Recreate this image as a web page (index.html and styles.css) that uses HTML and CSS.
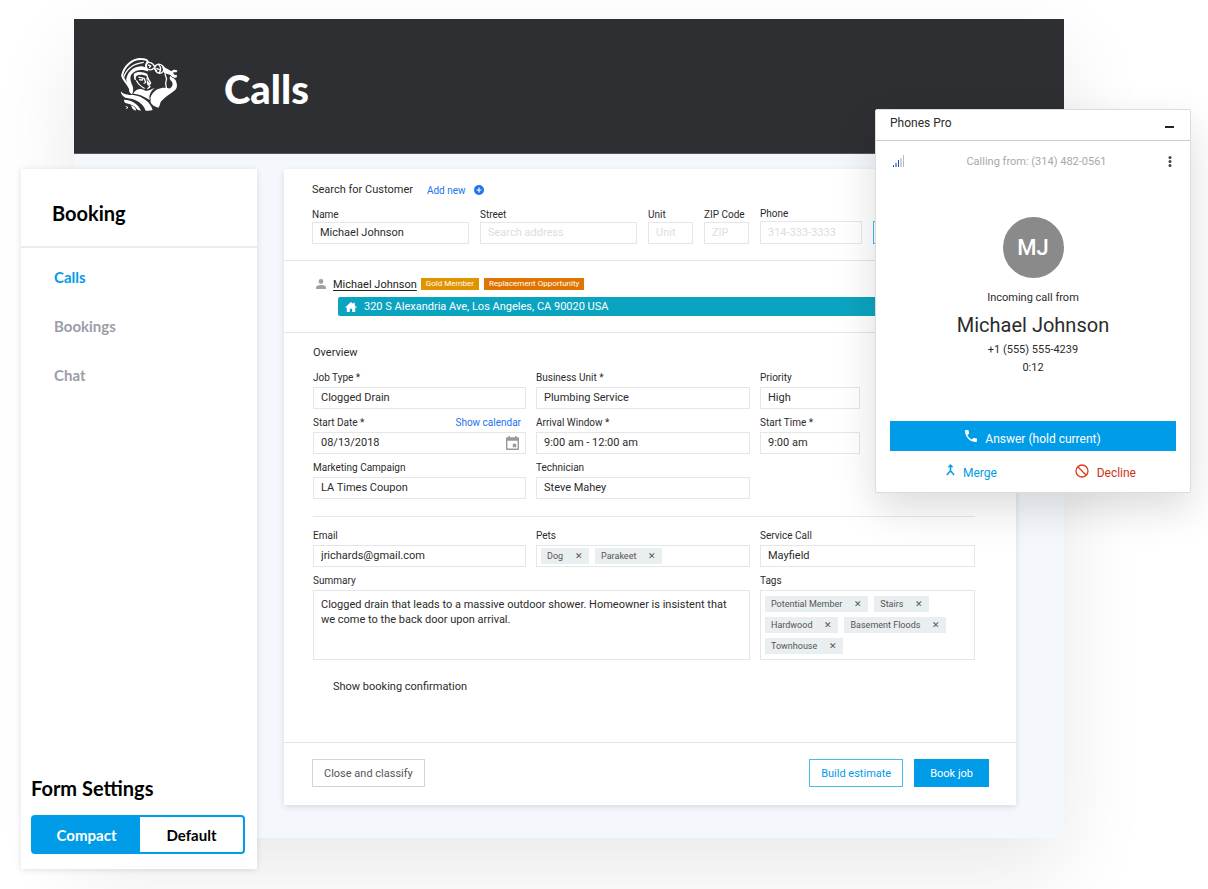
FILE: index.html
```html
<!DOCTYPE html>
<html lang="en">
<head>
    <meta charset="UTF-8">
    <meta name="viewport" content="width=device-width, initial-scale=1.0">
    <title>Calls</title>
    <link rel="stylesheet" href="styles.css">
</head>
<body>
    <div class="stage">
        <div class="app">
            <header class="app-header">
                <svg class="logo" viewBox="180 140 177 166" aria-hidden="true">
                    <!-- Helmet crest -->
                    <path class="logo-line" d="M211 247 C215 229 190 215 186 196 C191 168 216 145 244 146 C255 146 262 149 264 155 C257 160 256 168 261 178"/>
                    <path class="logo-line thin" d="M189 206 C196 181 215 160 251 156"/>
                    <path class="logo-fill" d="M198 208 C203 185 217 172 238 169 C247 167 255 169 263 177 L265 184 C249 176 226 177 214 193 C208 201 212 217 217 226 C221 237 219 246 216 253 C210 249 207 244 207 234 C207 224 200 219 198 208 Z"/>
                    <!-- Visor and face -->
                    <path class="logo-fill" d="M221 191 C231 182 249 184 263 191 L260 198 C251 193 239 192 231 196 C225 200 226 207 230 212 L222 207 Z"/>
                    <path class="logo-line thin" d="M229 211 C234 221 244 230 254 235 M235 201 L249 204 L246 210 L237 208 M261 195 L265 207 L272 219 L266 224 L270 230 L262 236 M252 203 L257 217 L251 220"/>
                    <path class="logo-fill" d="M259 202 L264 202 L262 211 L272 222 L262 225 Z"/>
                    <!-- Wrench and fist -->
                    <path class="logo-line thin" d="M259 158 C268 153 280 159 283 168 L289 165 M262 176 C270 181 278 178 282 173 L291 183 M264 164 L272 167 L268 173"/>
                    <path class="logo-line thin" d="M285 169 C289 160 300 159 307 166 C313 170 316 177 309 184 C303 192 293 190 288 183 C284 178 283 174 285 169 Z M296 164 C304 170 304 178 298 187 M289 174 L300 178"/>
                    <path class="logo-fill" d="M306 167 L323 176 L335 183 C339 177 345 177 353 181 L350 186 L340 186 L342 193 L352 195 L350 202 C341 204 335 200 332 194 L312 188 Z"/>
                    <!-- Raised arm and chest -->
                    <path class="logo-fill" d="M331 197 C338 204 346 204 348 212 C354 226 352 237 343 242 C330 252 317 260 303 274 C299 281 301 286 295 293 L282 288 C273 282 270 276 272 269 C269 260 279 245 291 238 C304 232 316 231 330 235 C338 230 341 220 335 213 C329 208 328 202 331 197 Z"/>
                    <path class="logo-line thin" d="M316 189 C313 196 323 201 319 211 C314 220 319 229 320 235"/>
                    <path class="logo-fill" d="M219 250 C230 234 243 234 254 241 C264 245 274 235 284 234 C274 241 269 250 268 260 L269 270 C252 259 240 253 219 250 Z"/>
                    <!-- Tunic folds -->
                    <path class="logo-fill" d="M182 243 C188 252 202 254 220 255 C249 259 272 278 278 300 C270 303 263 302 257 302 C247 276 222 266 199 264 C190 260 182 253 182 243 Z"/>
                    <path class="logo-fill" d="M191 269 C213 270 232 279 243 302 L232 299 C224 285 207 282 194 278 Z M212 286 C223 289 229 296 227 302 C218 300 216 294 212 286 Z M195 288 C206 289 207 296 196 298 L201 293 Z"/>
                </svg>
                <h1>Calls</h1>
            </header>

            <div class="workspace">
                <aside class="sidebar">
                    <h2 class="sidebar-title">Booking</h2>
                    <nav class="sidebar-nav">
                        <a class="active" href="#calls">Calls</a>
                        <a href="#bookings">Bookings</a>
                        <a href="#chat">Chat</a>
                    </nav>
                    <div class="form-settings">
                        <h2>Form Settings</h2>
                        <div class="toggle">
                            <button class="selected" type="button">Compact</button>
                            <button type="button">Default</button>
                        </div>
                    </div>
                </aside>

                <form class="booking">
                    <section class="search">
                        <div class="search-head">
                            <h3>Search for Customer</h3>
                            <a href="#new">Add new
                                <svg width="10" height="10" viewBox="0 0 10 10" aria-hidden="true"><circle cx="5" cy="5" r="5" fill="#2072ee"/><path d="M5 2.5v5M2.5 5h5" stroke="#fff" stroke-width="1.2"/></svg>
                            </a>
                        </div>
                        <div class="search-row">
                            <div class="field wide"><label for="name">Name</label><input id="name" type="text" value="Michael Johnson"></div>
                            <div class="field wide"><label for="street">Street</label><input id="street" type="text" placeholder="Search address"></div>
                            <div class="field small"><label for="unit">Unit</label><input id="unit" type="text" placeholder="Unit"></div>
                            <div class="field small"><label for="zip">ZIP Code</label><input id="zip" type="text" placeholder="ZIP"></div>
                            <div class="field phone"><label for="phone">Phone</label><input id="phone" type="tel" placeholder="314-333-3333"></div>
                            <button class="search-btn" type="button" aria-label="Search"></button>
                        </div>
                    </section>

                    <section class="customer">
                        <div class="customer-line">
                            <svg width="10" height="10" viewBox="0 0 10 10" fill="#a0a0a0" aria-hidden="true"><circle cx="5" cy="2.5" r="2.4"/><path d="M0 10V8.500C0 6.800 3 6 5 6s5 .8 5 2.500V10z"/></svg>
                            <a href="#customer">Michael Johnson</a>
                            <span class="badge gold">Gold Member</span>
                            <span class="badge orange">Replacement Opportunity</span>
                        </div>
                        <div class="address">
                            <svg width="12" height="10" viewBox="0 0 12 10" fill="#fff" aria-hidden="true"><path d="M6 0L0 5.400h1.800V10h3V6.700h2.400V10h3V5.400H12L9.800 3.400V.8H8.300v1.300z"/></svg>
                            320 S Alexandria Ave, Los Angeles, CA 90020 USA
                        </div>
                    </section>

                    <section class="overview">
                        <h3>Overview</h3>
                        <div class="grid">
                            <div class="field"><label for="job">Job Type *</label><input id="job" type="text" value="Clogged Drain"></div>
                            <div class="field"><label for="business">Business Unit *</label><input id="business" type="text" value="Plumbing Service"></div>
                            <div class="field short"><label for="priority">Priority</label><input id="priority" type="text" value="High"></div>
                            <div class="field">
                                <div class="label-row"><label for="date">Start Date *</label><a href="#calendar">Show calendar</a></div>
                                <div class="date-box">
                                    <input id="date" type="text" value="08/13/2018">
                                    <svg width="13" height="14" viewBox="0 0 13 14" aria-hidden="true"><path fill="#999" fill-rule="evenodd" d="M2.500 0H4v1.300h5V0h1.500v1.300H12a1 1 0 0 1 1 1V13a1 1 0 0 1-1 1H1a1 1 0 0 1-1-1V2.300a1 1 0 0 1 1-1h1.500zM1.400 4.800v7.800h10.200V4.800zM6.800 7.800h3.400v3.400H6.800z"/></svg>
                                </div>
                            </div>
                            <div class="field"><label for="arrival">Arrival Window *</label><input id="arrival" type="text" value="9:00 am - 12:00 am"></div>
                            <div class="field short"><label for="time">Start Time *</label><input id="time" type="text" value="9:00 am"></div>
                            <div class="field"><label for="campaign">Marketing Campaign</label><input id="campaign" type="text" value="LA Times Coupon"></div>
                            <div class="field"><label for="tech">Technician</label><input id="tech" type="text" value="Steve Mahey"></div>
                        </div>
                        <hr>
                        <div class="grid">
                            <div class="field"><label for="email">Email</label><input id="email" type="email" value="jrichards@gmail.com"></div>
                            <div class="field">
                                <span class="label">Pets</span>
                                <div class="chips">
                                    <span class="chip">Dog <button type="button" aria-label="Remove Dog">✕</button></span>
                                    <span class="chip">Parakeet <button type="button" aria-label="Remove Parakeet">✕</button></span>
                                </div>
                            </div>
                            <div class="field"><label for="service">Service Call</label><input id="service" type="text" value="Mayfield"></div>
                            <div class="field span2"><label for="summary">Summary</label><textarea id="summary">Clogged drain that leads to a massive outdoor shower. Homeowner is insistent that we come to the back door upon arrival.</textarea></div>
                            <div class="field">
                                <span class="label">Tags</span>
                                <div class="chips tall">
                                    <span class="chip">Potential Member <button type="button" aria-label="Remove Potential Member">✕</button></span>
                                    <span class="chip">Stairs <button type="button" aria-label="Remove Stairs">✕</button></span>
                                    <span class="chip">Hardwood <button type="button" aria-label="Remove Hardwood">✕</button></span>
                                    <span class="chip">Basement Floods <button type="button" aria-label="Remove Basement Floods">✕</button></span>
                                    <span class="chip">Townhouse <button type="button" aria-label="Remove Townhouse">✕</button></span>
                                </div>
                            </div>
                        </div>
                        <label class="confirm"><input type="checkbox">Show booking confirmation</label>
                    </section>

                    <footer class="actions">
                        <button class="btn" type="button">Close and classify</button>
                        <button class="btn outline" type="button">Build estimate</button>
                        <button class="btn primary" type="button">Book job</button>
                    </footer>
                </form>
            </div>
        </div>

        <!-- Phone widget floats over the app -->
        <div class="phone-card">
            <div class="phone-title">
                <span>Phones Pro</span>
                <button type="button" aria-label="Minimize"><svg width="9" height="2" viewBox="0 0 9 2"><path d="M0 0h9v2H0z" fill="#222"/></svg></button>
            </div>
            <div class="phone-body">
                <div class="phone-status">
                    <svg width="12" height="12" viewBox="0 0 12 12" shape-rendering="crispEdges" aria-hidden="true"><path d="M0 10h1v2H0z" fill="#1a56c4"/><path d="M2 8h2v4H2z" fill="#7ba0e0"/><path d="M5 5h1v7H5z" fill="#1a56c4"/><path d="M7 3h2v9H7z" fill="#d0d0d6"/><path d="M10 0h1v12h-1z" fill="#bbb"/></svg>
                    <span>Calling from: (314) 482-0561</span>
                    <button type="button" aria-label="More"><svg width="4" height="11" viewBox="0 0 4 11" fill="#444"><circle cx="2" cy="1.500" r="1.500"/><circle cx="2" cy="5.500" r="1.500"/><circle cx="2" cy="9.500" r="1.500"/></svg></button>
                </div>
                <div class="avatar">MJ</div>
                <div class="incoming">Incoming call from</div>
                <div class="caller">Michael Johnson</div>
                <div class="number">+1 (555) 555-4239</div>
                <div class="number">0:12</div>
                <button class="answer" type="button">
                    <svg width="12" height="12" viewBox="3 3 18 18" fill="#fff" aria-hidden="true"><path d="M6.620 10.790c1.440 2.830 3.760 5.140 6.590 6.590l2.200-2.200c.27-.27.67-.36 1.020-.24 1.120.37 2.330.57 3.570.57.55 0 1 .45 1 1V20c0 .55-.45 1-1 1C10.610 21 3 13.390 3 4c0-.55.45-1 1-1h3.500c.55 0 1 .45 1 1 0 1.250.2 2.450.57 3.570.11.35.03.74-.25 1.020z"/></svg>
                    <span>Answer (hold current)</span>
                </button>
                <div class="call-actions">
                    <button class="merge" type="button">
                        <svg width="9" height="12" viewBox="0 0 9 12" aria-hidden="true"><path d="M4.500 0L7.500 3.200H5.300V6.400L8.700 10.600L7.600 11.600L4.500 7.900L1.400 11.600L.3 10.600L3.700 6.400V3.200H1.500z" fill="#0a9ce4"/></svg>
                        <span>Merge</span>
                    </button>
                    <button class="decline" type="button">
                        <svg width="14" height="14" viewBox="0 0 14 14" fill="none" stroke="#dd3a1a" stroke-width="1.300" aria-hidden="true"><circle cx="7" cy="7" r="6"/><path d="M2.800 2.800l8.400 8.400"/></svg>
                        <span>Decline</span>
                    </button>
                </div>
            </div>
        </div>
    </div>
</body>
</html>
```
FILE: styles.css
```css
* {
    box-sizing: border-box;
}

body {
    margin: 0;
    background: #fff;
    color: #2b2b2b;
    font-family: Roboto, sans-serif;
    font-size: 11px;
    overflow-x: hidden;
}

h1, h2, h3 {
    margin: 0;
}

button, input, textarea {
    font: inherit;
    color: inherit;
    margin: 0;
}

button {
    padding: 0;
    border: none;
    background: none;
    cursor: pointer;
}

svg {
    display: block;
    flex: none;
}

.stage {
    position: relative;
    padding: 19px 144px 51px 74px;
}

.app {
    background: #f4f8fc;
    box-shadow: 0 32px 80px rgba(0, 0, 0, 0.09);
}

.app-header {
    display: flex;
    align-items: center;
    gap: 45px;
    height: 135px;
    padding: 0 46px;
    background: #2e2f33;
    border-bottom: 1px solid #55575b;
    color: #fff;
}

.app-header h1 {
    font-family: Lato, sans-serif;
    font-size: 40px;
    font-weight: 900;
    line-height: 48px;
    padding-top: 5px;
}

.logo {
    width: 59px;
    height: 55px;
    margin-bottom: 4px;
}

.logo-fill {
    fill: #fff;
}

.logo-line {
    fill: none;
    stroke: #fff;
    stroke-width: 6px;
    stroke-linejoin: round;
}

.logo-line.thin {
    stroke-width: 4px;
}

/* Sidebar hangs out of the left and bottom edges of the app */
.workspace {
    display: flex;
    gap: 27px;
    margin-left: -53px;
    padding: 15px 48px 33px 0;
}

.sidebar {
    display: flex;
    flex-direction: column;
    flex: none;
    width: 236px;
    margin-bottom: -64px;
    background: #fff;
    box-shadow: 0 1px 6px rgba(0, 0, 0, 0.12);
    font-family: Lato, sans-serif;
    font-weight: 700;
    color: #000;
}

.sidebar-title {
    padding: 32px 31px 20px;
    border-bottom: 2px solid #ebebeb;
    font-size: 20px;
    line-height: 25px;
}

.sidebar-nav {
    display: flex;
    flex-direction: column;
    gap: 29px;
    padding: 19px 33px;
    font-size: 15px;
    line-height: 20px;
}

.sidebar-nav a {
    color: #9c9da8;
    text-decoration: none;
}

.sidebar-nav a.active {
    color: #009ce8;
}

.form-settings {
    margin-top: auto;
    padding: 0 12px 15px 10px;
}

.form-settings h2 {
    font-size: 20px;
    line-height: 26px;
    margin-bottom: 14px;
}

.toggle {
    display: flex;
    height: 39px;
    border: 2px solid #009ce8;
    border-radius: 4px;
    font-size: 15px;
}

.toggle button {
    flex: 1;
}

.toggle .selected {
    flex: none;
    width: 51%;
    background: #009ce8;
    color: #fff;
}

.booking {
    flex: 1;
    min-width: 0;
    background: #fff;
    box-shadow: 0 2px 6px rgba(0, 0, 0, 0.12);
}

.booking h3 {
    font-size: 11px;
    font-weight: 400;
    line-height: 16px;
}

.booking a {
    color: #2072ee;
    text-decoration: none;
}

.search {
    padding: 13px 28px 16px;
    border-bottom: 1px solid #e4e4e4;
}

.search-head {
    display: flex;
    gap: 14px;
    margin-bottom: 9px;
}

.search-head a {
    display: flex;
    align-items: center;
    gap: 8px;
    font-size: 10px;
}

.search-row {
    display: flex;
    align-items: flex-end;
    gap: 11px;
}

.field {
    display: flex;
    flex-direction: column;
    gap: 2px;
    min-width: 0;
}

.search-row .field {
    flex: none;
    gap: 0;
}

.field label, .field .label, .label-row {
    font-size: 10px;
    line-height: 14px;
    white-space: nowrap;
}

.field input {
    width: 100%;
    height: 22px;
    padding: 0 7px 1px;
    border: 1px solid #e4e6e7;
    background: #fff;
}

.field input::placeholder {
    color: #ddd;
    opacity: 1;
}

.wide {
    width: 157px;
}

.small {
    width: 45px;
}

.phone {
    width: 102px;
}

.phone input {
    height: 23px;
}

.search-btn {
    flex: 1;
    height: 23px;
    border: 1px solid #4ab9ee;
}

.customer {
    padding: 16px 27px 16px 32px;
    border-bottom: 1px solid #e4e4e4;
}

.customer-line {
    display: flex;
    align-items: center;
    height: 14px;
    margin-bottom: 6px;
}

.customer-line a {
    margin: 0 4px 0 7px;
    color: #222;
    text-decoration: underline;
    text-underline-offset: 2px;
}

.badge {
    margin-right: 5px;
    padding: 0 5px;
    color: #fff;
    font-size: 8px;
    line-height: 12px;
}

.gold {
    background: #e09400;
}

.orange {
    background: #e07400;
}

.address {
    display: flex;
    align-items: center;
    gap: 7px;
    height: 19px;
    margin-left: 22px;
    padding-left: 7px;
    border-radius: 2px;
    background: #0ba4c0;
    color: #fff;
}

.overview {
    padding: 12px 41px 48px 29px;
    border-bottom: 1px solid #e4e4e4;
}

.overview h3 {
    margin-bottom: 10px;
}

.grid {
    display: grid;
    grid-template-columns: 213fr 214fr 215fr;
    gap: 7px 10px;
}

.short {
    width: 100px;
}

.span2 {
    grid-column: span 2;
}

.label-row {
    display: flex;
    justify-content: space-between;
    padding-right: 5px;
}

.date-box {
    position: relative;
}

.date-box svg {
    position: absolute;
    right: 7px;
    top: 4px;
}

.overview hr {
    margin: 17px 0 12px;
    border: none;
    border-top: 1px solid #e8e8e8;
}

.field textarea {
    display: block;
    height: 70px;
    padding: 6px 7px;
    border: 1px solid #e4e6e7;
    line-height: 15px;
    resize: none;
}

.chips {
    display: flex;
    flex-wrap: wrap;
    align-content: flex-start;
    gap: 5px 6px;
    height: 22px;
    padding: 2px 4px;
    border: 1px solid #e4e6e7;
}

.chips.tall {
    height: 70px;
    padding: 5px 4px;
}

.chip {
    display: flex;
    align-items: center;
    gap: 12px;
    height: 16px;
    padding: 0 6px;
    background: #e9eef1;
    color: #555;
    font-size: 9px;
}

.chip button {
    width: 8px;
    line-height: 12px;
}

.confirm {
    display: flex;
    align-items: center;
    gap: 6px;
    height: 16px;
    margin-top: 18px;
}

.confirm input {
    width: 14px;
    height: 14px;
    appearance: none;
}

.actions {
    display: flex;
    gap: 11px;
    padding: 16px 27px 18px 28px;
}

.btn {
    height: 28px;
    padding: 0 11px;
    border: 1px solid #d4d4d4;
    color: #555;
}

.btn.outline {
    margin-left: auto;
    border-color: #4ab9ee;
    color: #009ce8;
}

.btn.primary {
    padding: 0 15px;
    border-color: #009ce8;
    background: #009ce8;
    color: #fff;
}

.phone-card {
    position: absolute;
    top: 109px;
    right: 17px;
    width: 316px;
    border: 1px solid #dcdcdc;
    border-radius: 2px;
    background: #fff;
    box-shadow: 0 16px 40px rgba(0, 0, 0, 0.14);
}

.phone-title {
    display: flex;
    align-items: flex-start;
    justify-content: space-between;
    height: 31px;
    padding: 5px 16px 0 14px;
    border-bottom: 1px solid #ccc;
    font-size: 12px;
    line-height: 16px;
}

.phone-title button {
    padding-top: 11px;
}

.phone-body {
    display: flex;
    flex-direction: column;
    align-items: center;
    padding: 12px 14px 10px;
}

.phone-status {
    display: flex;
    justify-content: space-between;
    align-items: center;
    align-self: stretch;
    height: 16px;
    margin-bottom: 48px;
    padding: 0 4px 0 3px;
    color: #a8a8a8;
}

.avatar {
    width: 61px;
    height: 61px;
    margin-bottom: 12px;
    border-radius: 50%;
    background: #8a8a8a;
    color: #fff;
    font-size: 22px;
    font-weight: 500;
    line-height: 61px;
    text-align: center;
}

.incoming {
    margin-bottom: 3px;
    line-height: 16px;
}

.caller {
    font-size: 20px;
    line-height: 32px;
}

.number {
    line-height: 18px;
}

.answer {
    display: flex;
    justify-content: center;
    align-items: center;
    gap: 8px;
    align-self: stretch;
    height: 30px;
    margin-top: 44px;
    background: #009ce8;
    color: #fff;
    font-size: 12px;
}

.answer span {
    padding-top: 5px;
}

.call-actions {
    display: flex;
    justify-content: space-between;
    align-self: stretch;
    padding: 13px 40px 0 56px;
    font-size: 12px;
    line-height: 18px;
}

.call-actions button {
    display: flex;
    gap: 8px;
}

.merge {
    color: #009ce8;
}

.decline {
    color: #cc3311;
}
```
